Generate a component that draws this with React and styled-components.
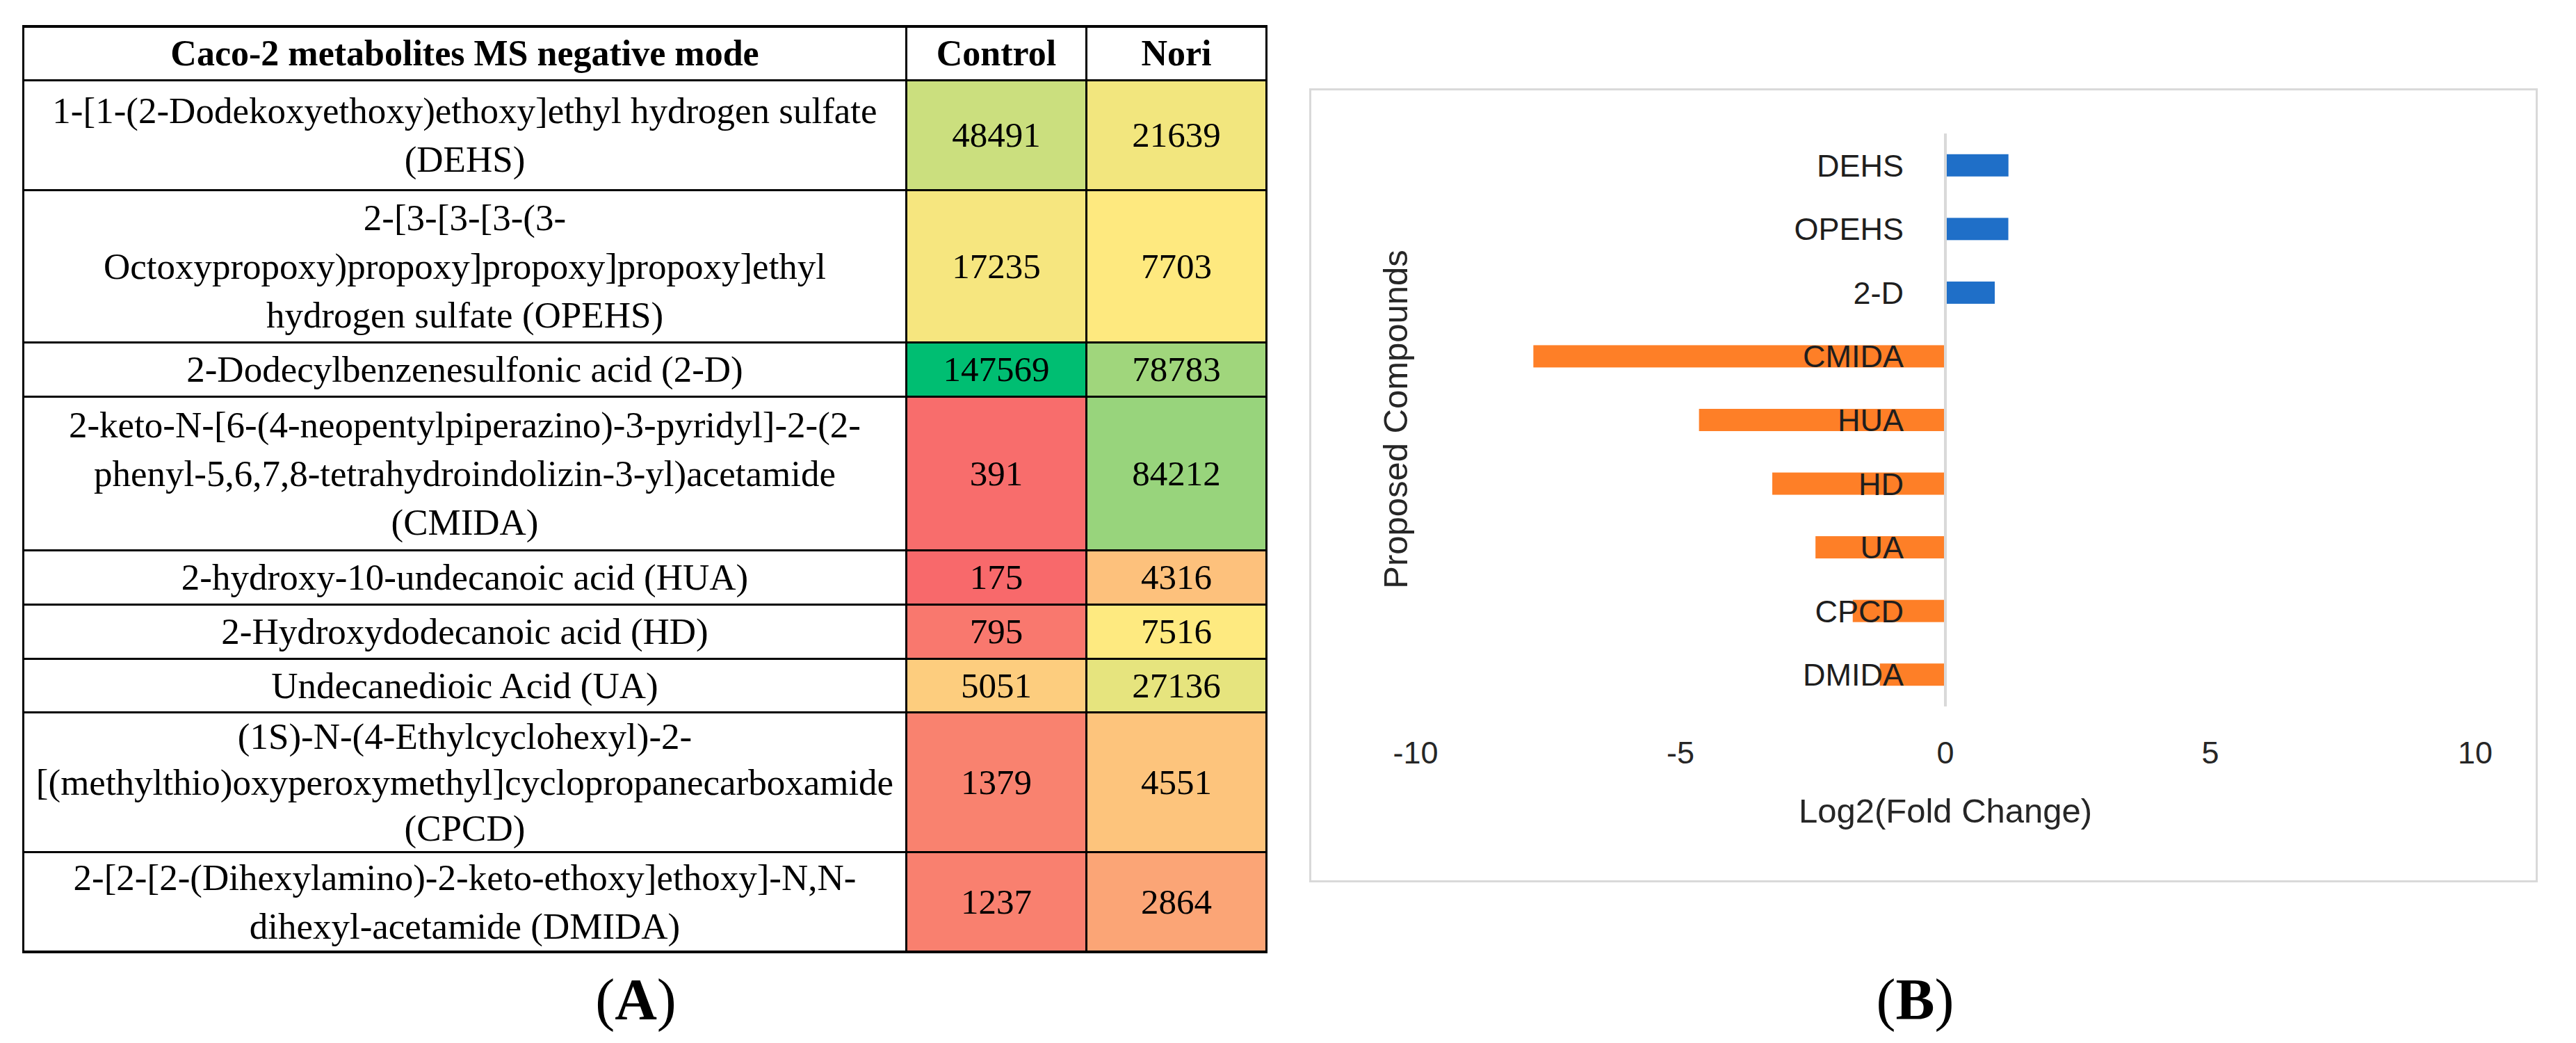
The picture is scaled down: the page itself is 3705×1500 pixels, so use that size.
import React from "react";
import styled, { createGlobalStyle } from "styled-components";

const GlobalStyle = createGlobalStyle`
  html, body {
    margin: 0;
    padding: 0;
    background: #fff;
  }
  body {
    font-family: "Liberation Serif", "Times New Roman", serif;
    color: #000;
  }
`;

// table rows, line breaks as in the figure
const compounds = [
  {
    lines: ["1-[1-(2-Dodekoxyethoxy)ethoxy]ethyl hydrogen sulfate", "(DEHS)"],
    short: "DEHS",
    control: 48491,
    nori: 21639,
    controlBg: "#cbdf7e",
    noriBg: "#f2e67e",
    height: 158,
  },
  {
    lines: ["2-[3-[3-[3-(3-", "Octoxypropoxy)propoxy]propoxy]propoxy]ethyl", "hydrogen sulfate (OPEHS)"],
    short: "OPEHS",
    control: 17235,
    nori: 7703,
    controlBg: "#f6e67f",
    noriBg: "#fee97f",
    height: 219,
  },
  {
    lines: ["2-Dodecylbenzenesulfonic acid (2-D)"],
    short: "2-D",
    control: 147569,
    nori: 78783,
    controlBg: "#00be72",
    noriBg: "#a0d67c",
    height: 78,
  },
  {
    lines: ["2-keto-N-[6-(4-neopentylpiperazino)-3-pyridyl]-2-(2-", "phenyl-5,6,7,8-tetrahydroindolizin-3-yl)acetamide", "(CMIDA)"],
    short: "CMIDA",
    control: 391,
    nori: 84212,
    controlBg: "#f86d6c",
    noriBg: "#98d47c",
    height: 221,
  },
  {
    lines: ["2-hydroxy-10-undecanoic acid (HUA)"],
    short: "HUA",
    control: 175,
    nori: 4316,
    controlBg: "#f8696b",
    noriBg: "#fdc17c",
    height: 78,
  },
  {
    lines: ["2-Hydroxydodecanoic acid (HD)"],
    short: "HD",
    control: 795,
    nori: 7516,
    controlBg: "#f9786e",
    noriBg: "#feea80",
    height: 78,
  },
  {
    lines: ["Undecanedioic Acid (UA)"],
    short: "UA",
    control: 5051,
    nori: 27136,
    controlBg: "#fdcd7e",
    noriBg: "#e6e47e",
    height: 77,
  },
  {
    lines: ["(1S)-N-(4-Ethylcyclohexyl)-2-", "[(methylthio)oxyperoxymethyl]cyclopropanecarboxamide", "(CPCD)"],
    short: "CPCD",
    control: 1379,
    nori: 4551,
    controlBg: "#f9826f",
    noriBg: "#fdc47c",
    height: 199,
    tight: true,
  },
  {
    lines: ["2-[2-[2-(Dihexylamino)-2-keto-ethoxy]ethoxy]-N,N-", "dihexyl-acetamide (DMIDA)"],
    short: "DMIDA",
    control: 1237,
    nori: 2864,
    controlBg: "#f9806f",
    noriBg: "#fba576",
    height: 142,
  },
];

// chart geometry (inside the chart frame)
const PLOT_W = 1761;
const PLOT_H = 1136;
const ZERO_X = 912;
const UNIT = 76.2;
const PLOT_TOP = 62;
const PLOT_BOTTOM = 886;
const BAND = (PLOT_BOTTOM - PLOT_TOP) / compounds.length;
const BAR_H = 32;
const TICKS = [-10, -5, 0, 5, 10];

export default function App() {
  return (
    <>
      <GlobalStyle />
      <Page>
        <TableCell>
          <Table>
            <colgroup>
              <col style={{ width: 1270 }} />
              <col style={{ width: 259 }} />
              <col style={{ width: 259 }} />
            </colgroup>
            <thead>
              <Row $h={77}>
                <HeadCell>Caco-2 metabolites MS negative mode</HeadCell>
                <HeadCell>Control</HeadCell>
                <HeadCell>Nori</HeadCell>
              </Row>
            </thead>
            <tbody>
              {compounds.map((c) => (
                <Row key={c.short} $h={c.height}>
                  <NameCell $tight={c.tight}>
                    {c.lines.map((l) => (
                      <Line key={l}>{l}</Line>
                    ))}
                  </NameCell>
                  <Cell $bg={c.controlBg}>{c.control}</Cell>
                  <Cell $bg={c.noriBg}>{c.nori}</Cell>
                </Row>
              ))}
            </tbody>
          </Table>
        </TableCell>

        <ChartCell>
          <ChartFrame>
            <svg width={PLOT_W} height={PLOT_H} viewBox={`0 0 ${PLOT_W} ${PLOT_H}`}>
              <rect x={ZERO_X - 2} y={PLOT_TOP} width={4} height={PLOT_BOTTOM - PLOT_TOP} fill="#d9d9d9" />
              {compounds.map((c, i) => {
                const v = Math.log2(c.control / c.nori);
                const w = Math.abs(v) * UNIT;
                const cy = PLOT_TOP + BAND * (i + 0.5);
                return (
                  <rect
                    key={c.short}
                    x={v > 0 ? ZERO_X + 2 : ZERO_X - 2 - w}
                    y={cy - BAR_H / 2}
                    width={w}
                    height={BAR_H}
                    fill={v > 0 ? "#1f6fc8" : "#fe7f27"}
                  />
                );
              })}
              {compounds.map((c, i) => (
                <CategoryLabel key={c.short} x={852} y={PLOT_TOP + BAND * (i + 0.5) + 16}>
                  {c.short}
                </CategoryLabel>
              ))}
              {TICKS.map((t) => (
                <TickLabel key={t} x={ZERO_X + t * UNIT} y={968}>
                  {t < 0 ? `-${Math.abs(t)}` : t}
                </TickLabel>
              ))}
              <AxisTitle x={ZERO_X} y={1053}>
                Log2(Fold Change)
              </AxisTitle>
              <AxisTitle transform="translate(138 473) rotate(-90)">Proposed Compounds</AxisTitle>
            </svg>
          </ChartFrame>
        </ChartCell>

        <Caption>
          (<b>A</b>)
        </Caption>
        <Caption>
          (<b>B</b>)
        </Caption>
      </Page>
    </>
  );
}

const Page = styled.div`
  display: grid;
  grid-template-columns: 1789px 1767px;
  grid-template-rows: auto auto;
  column-gap: 62px;
  padding: 36px 0 0 32px;
`;

const TableCell = styled.div`
  display: flex;
  flex-direction: column;
`;

const Table = styled.table`
  border-collapse: collapse;
  table-layout: fixed;
  width: 1789px;
  font-family: "Liberation Serif", "Times New Roman", serif;
  font-size: 51px;
  color: #000;

  thead tr th {
    border-top-width: 4px;
  }
  tbody tr:last-child td {
    border-bottom-width: 4px;
  }
`;

const Row = styled.tr`
  height: ${(p) => p.$h}px;
`;

const HeadCell = styled.th`
  border: 3px solid #000;
  background: #fff;
  font-size: 52px;
  font-weight: bold;
  text-align: center;
  vertical-align: middle;
  padding: 0 6px;
  line-height: 70px;
`;

const Cell = styled.td`
  border: 3px solid #000;
  background: ${(p) => p.$bg || "#fff"};
  text-align: center;
  vertical-align: middle;
  padding: 0 6px;
  line-height: 70px;
`;

const NameCell = styled(Cell)`
  font-size: 53px;
  line-height: ${(p) => (p.$tight ? 66 : 70)}px;
`;

const Line = styled.span`
  display: block;
  white-space: nowrap;
`;

const ChartCell = styled.div`
  padding-top: 91px;
`;

const ChartFrame = styled.div`
  width: 1761px;
  height: 1136px;
  border: 3px solid #d9d9d9;
  background: #fff;

  svg {
    display: block;
  }
`;

const CategoryLabel = styled.text`
  font-family: "Liberation Sans", Arial, sans-serif;
  font-size: 45px;
  fill: #1e1e1e;
  text-anchor: end;
`;

const TickLabel = styled.text`
  font-family: "Liberation Sans", Arial, sans-serif;
  font-size: 45px;
  fill: #262626;
  text-anchor: middle;
`;

const AxisTitle = styled.text`
  font-family: "Liberation Sans", Arial, sans-serif;
  font-size: 49px;
  fill: #262626;
  text-anchor: middle;
`;

const Caption = styled.div`
  margin-top: 17px;
  padding-right: 24px;
  text-align: center;
  font-family: "Liberation Serif", "Times New Roman", serif;
  font-size: 84px;
  line-height: 100px;
  color: #000;

  b {
    font-weight: bold;
  }
`;
